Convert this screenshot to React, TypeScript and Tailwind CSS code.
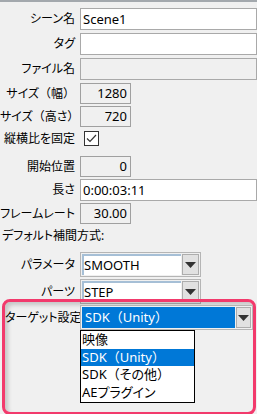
import type React from "react"

const font = "font-['Noto_Sans','Noto_Sans_CJK_JP',sans-serif] [font-feature-settings:'palt']"

// full-width bracket, kept at full width
const P = ({ children }: { children: React.ReactNode }) => (
    <span className="[font-feature-settings:normal]">{children}</span>
)

// Label cell, right aligned
const Label = ({ children }: { children: React.ReactNode }) => (
    <div className="w-[80px] shrink-0 pr-[5px] text-right text-[12px] leading-none text-black whitespace-nowrap">{children}</div>
)

const Row = ({ children, className = "" }: { children: React.ReactNode; className?: string }) => (
    <div className={`flex items-center ${className}`}>{children}</div>
)

const TextBox = ({ value = "", className = "" }: { value?: string; className?: string }) => (
    <div className={`border border-[#a9a9a9] px-[2px] text-[13px] leading-none flex items-center text-black ${className}`}>{value}</div>
)

const NumBox = ({ value }: { value: string }) => (
    <div className="w-[51px] h-[21px] border border-[#a0a0a0] bg-[#f0f0f0] px-[3px] text-[13px] flex items-center justify-end text-black">{value}</div>
)

const Arrow = () => (
    <svg width="11" height="6" viewBox="0 0 11 6">
        <path d="M0 0H11L5.5 6Z" fill="#333" />
    </svg>
)

const Combo = ({ value }: { value: string }) => (
    <div className="w-[121px] h-[25px] border border-[#b5b5b5] bg-[#f0f0f0] p-[1px] flex">
        <div className="flex-1 bg-white border-l-2 border-t-2 border-[#a6bfd6] flex items-center pl-[0px] text-[13px] text-black">{value}</div>
        <div className="w-[17px] ml-[1px] bg-[#e1e1e1] border border-[#adadad] flex items-center justify-center">
            <Arrow />
        </div>
    </div>
)

export default function App() {
    return (
        <div className={`w-[257px] h-[414px] bg-[#f0f0f0] border-t-2 border-[#a3a8ad] overflow-hidden ${font}`}>
            <div className="flex flex-col pt-[6px]">
                <Row>
                    <Label>シーン名</Label>
                    <TextBox value="Scene1" className="w-[177px] h-[22px] bg-white" />
                </Row>
                <Row className="mt-[3px]">
                    <Label>タグ</Label>
                    <TextBox className="w-[177px] h-[22px] bg-white" />
                </Row>
                <Row className="mt-[3px]">
                    <Label>ファイル名</Label>
                    <TextBox className="w-[177px] h-[22px] bg-[#f0f0f0]" />
                </Row>
                <Row className="mt-[3px]">
                    <Label>サイズ<P>（</P>幅<P>）</P></Label>
                    <NumBox value="1280" />
                </Row>
                <Row className="mt-[2px]">
                    <Label>サイズ<P>（</P>高さ<P>）</P></Label>
                    <NumBox value="720" />
                </Row>
                <Row className="mt-[4px]">
                    <Label>縦横比を固定</Label>
                    <div className="ml-[4px] w-[15px] h-[15px] border border-[#333] bg-white flex items-center justify-center">
                        <svg width="11" height="9" viewBox="0 0 11 9">
                            <path d="M1 4.5L4 7.5L10 1" stroke="#333" strokeWidth="1.2" fill="none" />
                        </svg>
                    </div>
                </Row>
                <Row className="mt-[10px]">
                    <Label>開始位置</Label>
                    <NumBox value="0" />
                </Row>
                <Row className="mt-[2px]">
                    <Label>長さ</Label>
                    <TextBox value="0:00:03:11" className="w-[177px] h-[22px] bg-white" />
                </Row>
                <Row className="mt-[2px]">
                    <Label>フレームレート</Label>
                    <NumBox value="30.00" />
                </Row>
                <div className="mt-[6px] pl-[2px] text-[12px] leading-none text-black h-[14px]">デフォルト補間方式:</div>
                <Row className="mt-[8px]">
                    <Label>パラメータ</Label>
                    <Combo value="SMOOTH" />
                </Row>
                <Row className="mt-[2px]">
                    <Label>パーツ</Label>
                    <Combo value="STEP" />
                </Row>
            </div>
            {/* highlighted target setting */}
            <div className="relative -mt-[5px] ml-[2px] w-[254px] h-[116px] rounded-[8px] border-[3px] border-[#f23a6c] shadow-[inset_3px_3px_4px_rgba(0,0,0,0.18)]">
                <div className="flex items-center mt-[3px]">
                    <div className="w-[75px] shrink-0 pr-[5px] text-right text-[12px] leading-none text-black whitespace-nowrap">ターゲット設定</div>
                    <div className="w-[174px] h-[25px] border border-[#b5b5b5] bg-[#f0f0f0] p-[1px] flex">
                        <div className="flex-1 bg-[#0078d7] flex items-center pl-[3px] text-[13px] text-white">SDK<P>（</P>Unity<P>）</P></div>
                        <div className="w-[15px] ml-[1px] bg-[#e1e1e1] border border-[#adadad] flex items-center justify-center">
                            <Arrow />
                        </div>
                    </div>
                </div>
                <div className="ml-[75px] w-[115px] border border-black bg-white text-[13px] text-black">
                    <div className="h-[18px] pl-[1px] flex items-center">映像</div>
                    <div className="h-[17px] pl-[1px] flex items-center bg-[#0078d7] text-white">SDK<P>（</P>Unity<P>）</P></div>
                    <div className="h-[18px] pl-[1px] flex items-center">SDK<P>（</P>その他<P>）</P></div>
                    <div className="h-[18px] pl-[1px] flex items-center">AEプラグイン</div>
                </div>
            </div>
        </div>
    )
}
